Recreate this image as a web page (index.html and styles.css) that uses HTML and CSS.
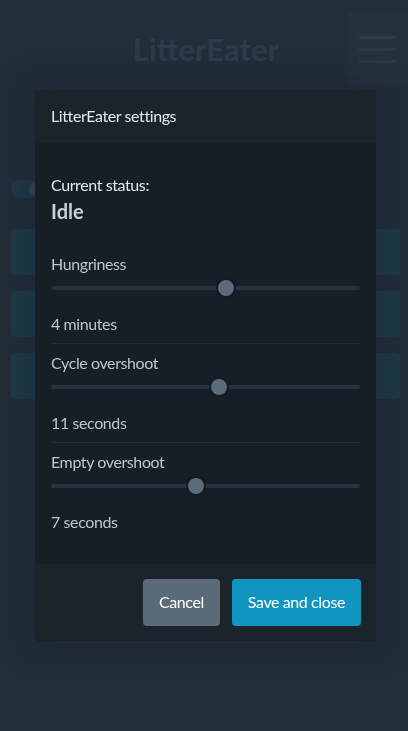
FILE: index.html
```html
<!DOCTYPE html>
<html lang="en">
<head>
<meta charset="utf-8">
<title>LitterEater</title>
<link rel="stylesheet" href="styles.css">
</head>
<body>
<div class="page">
  <header class="nav">
    <div class="nav-side"></div>
    <h1 class="brand">LitterEater</h1>
    <div class="nav-side nav-end">
      <button class="menu" aria-label="Menu"><span></span><span></span><span></span></button>
    </div>
  </header>
  <main class="content">
    <div class="toggle"><span class="knob"></span></div>
    <div class="cards">
      <div class="card"></div>
      <div class="card"></div>
      <div class="card"></div>
    </div>
  </main>
</div>

<div class="overlay">
  <article class="modal">
    <header class="modal-head">LitterEater settings</header>
    <section class="modal-body">
      <div class="status">
        <div class="status-label">Current status:</div>
        <div class="status-value">Idle</div>
      </div>
      <div class="settings">
        <div class="setting">
          <label class="setting-label">Hungriness</label>
          <input class="range" type="range" min="0" max="1000" value="571">
          <div class="setting-value">4 minutes</div>
        </div>
        <div class="setting">
          <label class="setting-label">Cycle overshoot</label>
          <input class="range" type="range" min="0" max="1000" value="547">
          <div class="setting-value">11 seconds</div>
        </div>
        <div class="setting">
          <label class="setting-label">Empty overshoot</label>
          <input class="range" type="range" min="0" max="1000" value="467">
          <div class="setting-value">7 seconds</div>
        </div>
      </div>
    </section>
    <footer class="modal-foot">
      <button class="btn btn-secondary">Cancel</button>
      <button class="btn btn-primary">Save and close</button>
    </footer>
  </article>
</div>
</body>
</html>
```

FILE: styles.css
```css
* { box-sizing: border-box; }

html, body {
  margin: 0;
  padding: 0;
  height: 100%;
}

body {
  background: #222e3a;
  font-family: "Lato", "Open Sans", sans-serif;
  font-size: 16px;
  line-height: 24px;
  letter-spacing: -0.4px;
  color: #bcc6ce;
  overflow: hidden;
}

/* ---- underlying page ---- */
.page {
  display: flex;
  flex-direction: column;
}

.nav {
  display: grid;
  grid-template-columns: 1fr auto 1fr;
  align-items: center;
  padding-top: 12px;
}

.brand {
  margin: 0;
  font-size: 31px;
  line-height: 75px;
  font-weight: 700;
  letter-spacing: 0;
  color: #2d3c4a;
  padding-left: 4px;
}

.nav-end {
  display: flex;
  justify-content: flex-end;
}

.menu {
  width: 60px;
  height: 75px;
  border: none;
  background: #25313d;
  border-radius: 4px 0 0 4px;
  padding: 0 12px 0 11px;
  display: flex;
  flex-direction: column;
  justify-content: center;
  gap: 9px;
}

.menu span {
  display: block;
  height: 3px;
  border-radius: 1px;
  background: #2d3a47;
}

.content {
  padding: 93px 8px 0 11px;
  display: flex;
  flex-direction: column;
}

.toggle {
  width: 34px;
  height: 18px;
  border-radius: 9px;
  background: #20394a;
  display: flex;
  align-items: center;
  justify-content: flex-end;
  padding: 0 2px;
}

.knob {
  width: 14px;
  height: 14px;
  border-radius: 50%;
  background: #3c4854;
}

.cards {
  margin-top: 31px;
  display: flex;
  flex-direction: column;
  gap: 16px;
}

.card {
  height: 46px;
  border-radius: 4px;
  background: #1f3a48;
}

/* ---- modal overlay ---- */
.overlay {
  position: fixed;
  inset: 0;
  display: flex;
  align-items: center;
  justify-content: center;
  padding-left: 3px;
}

.modal {
  width: 341px;
  height: 551px;
  display: flex;
  flex-direction: column;
  border-radius: 4px;
  overflow: hidden;
  background: #161e26;
  box-shadow: 0 0 30px 10px rgba(20, 28, 36, 0.35);
}

.modal-head {
  background: #1b232b;
  padding: 14px 16px 15px;
  color: #e2e8ed;
  line-height: 24px;
}

.modal-body {
  flex: 1;
  padding: 30px 16px 30px;
  display: flex;
  flex-direction: column;
  gap: 27px;
}

.status-label {
  color: #e2e8ed;
}

.status-value {
  font-size: 20px;
  line-height: 28px;
  font-weight: 700;
  letter-spacing: 0;
  color: #c6d0d8;
}

.settings {
  display: flex;
  flex-direction: column;
}

.setting {
  display: flex;
  flex-direction: column;
  padding: 7px 0;
}

.setting:first-child {
  padding-top: 0;
}

.setting:last-child {
  padding-bottom: 0;
}

.setting + .setting {
  border-top: 1px solid #222c36;
}

.setting-label,
.setting-value {
  color: #bcc6ce;
}

.range {
  -webkit-appearance: none;
  appearance: none;
  display: block;
  width: 100%;
  height: 20px;
  margin: 2px 0 14px;
  padding: 0;
  background: transparent;
}

.range::-webkit-slider-runnable-track {
  height: 4px;
  border-radius: 2px;
  background: #27333e;
}

.range::-webkit-slider-thumb {
  -webkit-appearance: none;
  appearance: none;
  box-sizing: content-box;
  width: 16px;
  height: 16px;
  margin-top: -8px;
  border-radius: 50%;
  background: #5b6b79;
  border: 2px solid #131a21;
}

.modal-foot {
  background: #1b232b;
  padding: 15px 15px 15px;
  display: flex;
  justify-content: flex-end;
  gap: 12px;
}

.btn {
  font-family: inherit;
  font-size: 16px;
  line-height: 24px;
  letter-spacing: -0.4px;
  padding: 11px 16px 12px;
  border: none;
  border-radius: 4px;
  color: #ffffff;
}

.btn-secondary {
  background: #5a6a79;
}

.btn-primary {
  background: #1095c1;
}
```
